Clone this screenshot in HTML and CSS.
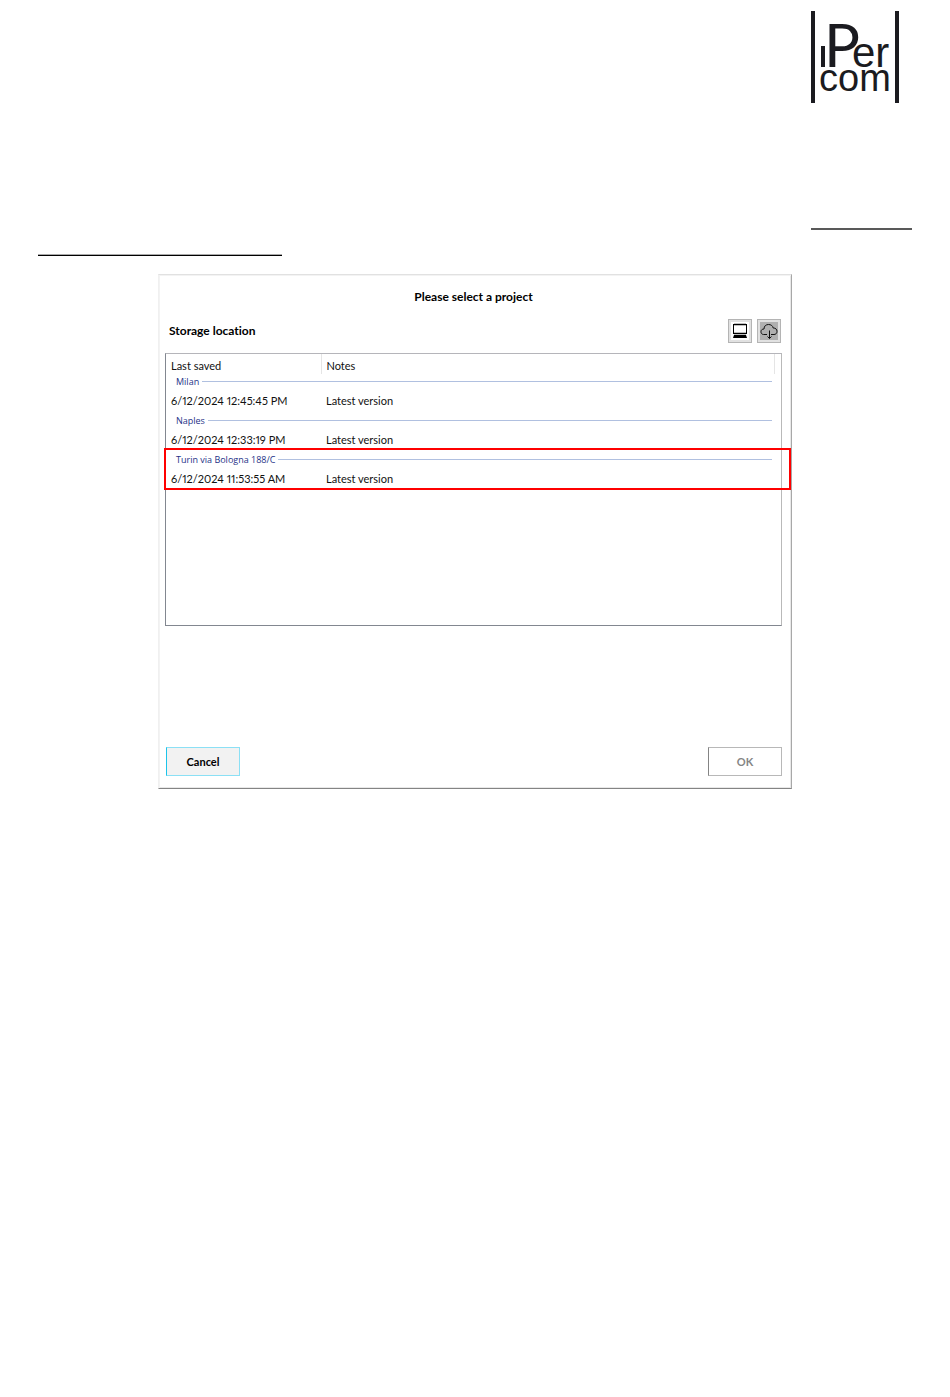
FILE: index.html
```html
<!DOCTYPE html>
<html lang="en">

<head>
  <meta charset="UTF-8">
  <meta name="viewport" content="width=device-width, initial-scale=1.0">
  <title>Please select a project</title>
  <link rel="stylesheet" href="styles.css">
</head>

<body>
  <header class="page-header">
    <svg class="logo" viewBox="0 0 90 92" role="img" aria-label="iPercom">
      <rect x="1" y="0" width="4" height="92" />
      <rect x="85" y="0" width="4" height="92" />
      <rect x="11" y="35" width="4" height="21" />
      <text y="56"><tspan class="logo-p" x="14">P</tspan><tspan class="logo-er" x="42">er</tspan></text>
      <text class="logo-com" x="9" y="80">com</text>
    </svg>
  </header>
  <div class="rules">
    <hr class="rule-right">
    <hr class="rule-left">
  </div>
  <main class="dialog">
    <h1>Please select a project</h1>
    <div class="storage">
      <h2>Storage location</h2>
      <div class="locations">
        <button type="button" class="location" aria-label="Computer">
          <svg viewBox="0 0 18 18">
            <rect x="2.500" y="2.500" width="13" height="9" fill="none" stroke="#000" />
            <path d="M3 2.500h12M3 11.500h12" stroke="#000" stroke-width="1.500" />
            <path d="M3 13h12l1 3H2z" />
          </svg>
        </button>
        <button type="button" class="location selected" aria-label="Cloud">
          <svg viewBox="0 0 18 18" fill="none" stroke="#111">
            <path d="M7 12.500H3.500C1.800 12.500 1 11 1 9.700C1 8 2.200 7 4 7C4 4 6 2.500 8.500 2.500C11 2.500 12.800 3.800 13.200 6C15.500 6 17 7.200 17 9.300C17 11.300 15.800 12.500 14 12.500H11" />
            <path d="M9.500 8.500v8M7.500 14.500l2 2 2-2" />
          </svg>
        </button>
      </div>
    </div>
    <div class="list">
      <table>
        <thead>
          <tr>
            <th class="saved">Last saved</th>
            <th>Notes</th>
            <th class="spacer"></th>
          </tr>
        </thead>
        <tbody>
          <tr class="group">
            <th colspan="3"><div>Milan</div></th>
          </tr>
          <tr>
            <td>6/12/2024 12:45:45 PM</td>
            <td colspan="2">Latest version</td>
          </tr>
        </tbody>
        <tbody>
          <tr class="group">
            <th colspan="3"><div>Naples</div></th>
          </tr>
          <tr>
            <td>6/12/2024 12:33:19 PM</td>
            <td colspan="2">Latest version</td>
          </tr>
        </tbody>
        <tbody class="highlight">
          <tr class="group">
            <th colspan="3"><div>Turin via Bologna 188/C</div></th>
          </tr>
          <tr>
            <td>6/12/2024 11:53:55 AM</td>
            <td colspan="2">Latest version</td>
          </tr>
        </tbody>
      </table>
    </div>
    <div class="actions">
      <button type="button" class="cancel">Cancel</button>
      <button type="button" class="ok" disabled>OK</button>
    </div>
  </main>
</body>

</html>
```

FILE: styles.css
```css
* {
  box-sizing: border-box;
}

body {
  margin: 0;
  background: #fff;
  color: #111;
  font: 11px/16px Lato, sans-serif;
  font-variant-ligatures: none;
  font-variant-numeric: proportional-nums;
}

.page-header {
  display: flex;
  justify-content: flex-end;
  padding: 11px 50px 0 0;
}

.logo {
  width: 90px;
  height: 92px;
  overflow: visible;
  fill: #1b1b20;
  font-family: "Liberation Sans", sans-serif;
}

.logo-p {
  font-family: Lato, sans-serif;
  font-size: 60px;
}

.logo-er {
  font-size: 42px;
}

.logo-com {
  font-size: 38px;
}

.rules {
  padding: 125px 38px 0;
}

.rules hr {
  height: 2px;
  margin: 0;
  border: 0;
}

.rules .rule-right {
  width: 101px;
  margin-left: auto;
  background: #595959;
}

.rules .rule-left {
  width: 244px;
  margin-top: 24px;
  border-top: 1px solid #aaa;
  background: #000;
}

.dialog {
  max-width: 634px;
  min-height: 515px;
  margin: 18px auto 40px;
  padding: 14px 9px 11px 6px;
  border: 1px solid;
  border-color: #e1e1e1 #a8a8a8 #848484 #f0f0f0;
  box-shadow: inset 1px 1px #f3f3f3, inset -1px -1px #e8e8e8;
}

h1,
h2 {
  margin: 0;
  color: #000;
  font-size: 12px;
  line-height: 16px;
}

h1 {
  text-align: center;
}

.storage {
  display: flex;
  justify-content: space-between;
  align-items: center;
  margin: 14px 0 10px;
  padding: 0 1px 0 4px;
}

.locations {
  display: flex;
  gap: 5px;
}

.location {
  width: 24px;
  height: 24px;
  padding: 2px;
  border: 1px solid #b4b4b4;
  background: #e1e1e1;
}

.location svg {
  display: block;
  width: 18px;
  height: 18px;
  background: #fff;
}

.location.selected svg {
  background: #b0b0b0;
}

.list {
  height: 273px;
  border: 1px solid;
  border-color: #b5b5ba #b9b9b9 #828790 #828790;
}

table {
  width: 100%;
  border-collapse: collapse;
  table-layout: fixed;
}

th,
td {
  height: 24px;
  padding: 0 5px;
  text-align: left;
  font-weight: normal;
}

thead th {
  height: 20px;
  padding-top: 3px;
  border-right: 1px solid #e5e5e5;
}

thead .spacer {
  width: 7px;
  padding: 0;
  border-right: 0;
}

.saved {
  width: 155px;
}

.group th {
  height: 15px;
  padding: 0 9px 0 10px;
  position: relative;
  color: #1e3287;
  font: 9px/15px "Open Sans", sans-serif;
}

.group div {
  display: flex;
  align-items: center;
  gap: 3px;
}

.group div::after {
  content: "";
  flex: 1;
  height: 1px;
  background: #b0c0e0;
}

/* red frame drawn over the last project */
.highlight .group th::after {
  content: "";
  position: absolute;
  top: -4px;
  left: -2px;
  right: -10px;
  height: 38px;
  border: 2px solid #f00;
}

.actions {
  display: flex;
  justify-content: space-between;
  margin-top: 121px;
  padding-left: 1px;
}

.actions button {
  width: 74px;
  height: 29px;
  padding: 0;
  border: 1px solid;
  font: bold 11px/16px Lato, sans-serif;
}

.actions .cancel {
  border-color: #8be0f5 #8be0f5 #8be0f5 #1cc4ea;
  background: #f2f2f2;
  color: #000;
}

.actions .ok {
  border-color: #b8b8b8 #b8b8b8 #b8b8b8 #848484;
  background: #fff;
  color: #858585;
}
```
